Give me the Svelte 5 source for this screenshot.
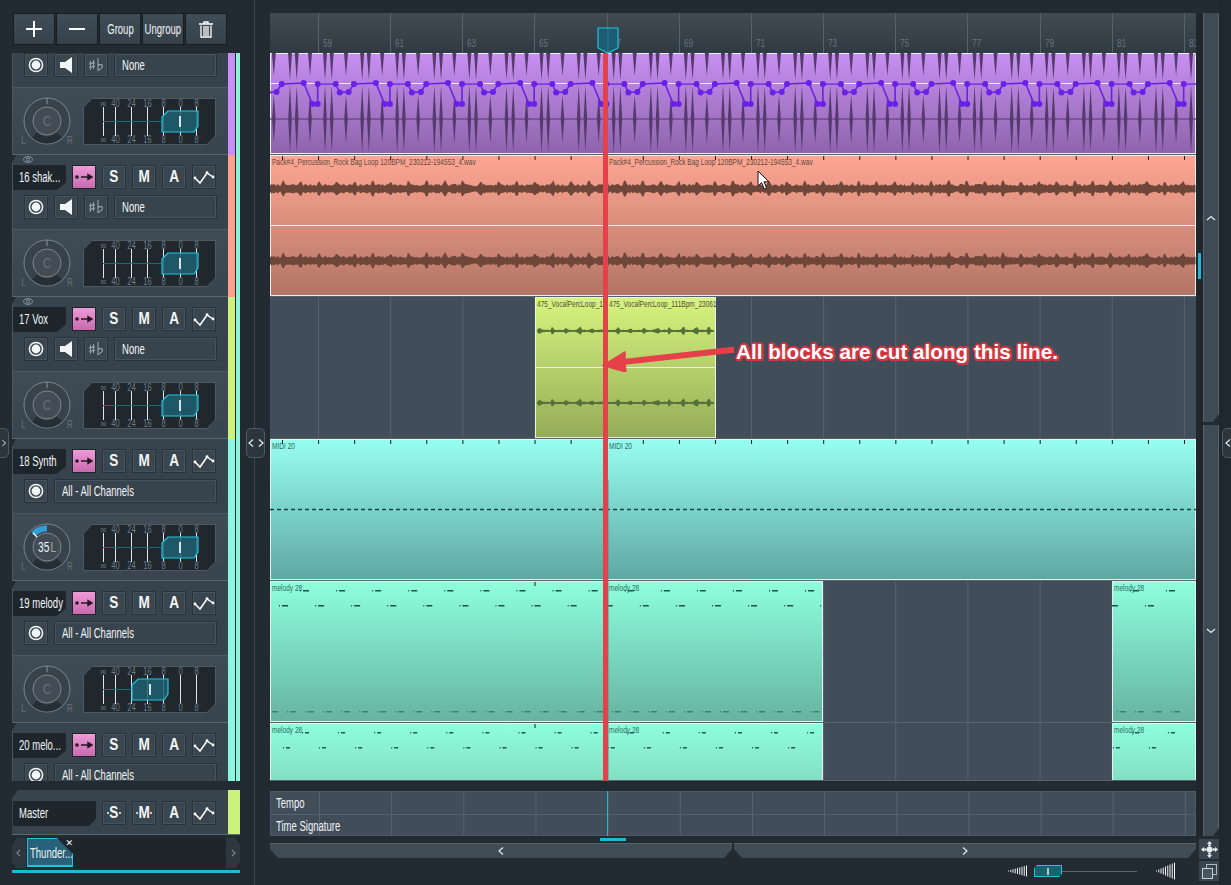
<script>
  const tracks = [
    { name: '15 drums', color: '#cb8ef5', kind: 'audio', pan: 'C' },
    { name: '16 shak...', color: '#ff9f8e', kind: 'audio', pan: 'C', eye: true },
    { name: '17 Vox', color: '#cdf07e', kind: 'audio', pan: 'C', eye: true },
    { name: '18 Synth', color: '#8cf5e0', kind: 'midi', pan: '35L' },
    { name: '19 melody', color: '#8cf5e0', kind: 'midi', pan: 'C', shift: -30 },
    { name: '20 melo...', color: '#8cf5e0', kind: 'midi', pan: 'C' }
  ];

  const meterMarks = [
    { x: 20, label: '∞' }, { x: 32, label: '40' }, { x: 48, label: '24' }, { x: 64, label: '16' },
    { x: 80, label: '8' }, { x: 97, label: '0' }, { x: 113, label: '8' }
  ];

  const rulerLabels = ['59', '61', '63', '65', '67', '69', '71', '73', '75', '77', '79', '81', '83'];

  // small seeded random so the waveforms stay the same between runs
  function makeRandom(seed) {
    let s = seed;
    return () => {
      s = (s * 1664525 + 1013904223) % 4294967296;
      return s / 4294967296;
    };
  }

  function band(cx, x0, x1, ampAt, seed) {
    const rnd = makeRandom(seed);
    const top = [];
    const bottom = [];
    for (let x = x0; x <= x1; x += 1.5) {
      const a = ampAt(x, rnd);
      top.push(`${x} ${(cx - a).toFixed(1)}`);
      bottom.unshift(`${x} ${(cx + a * 0.9).toFixed(1)}`);
    }
    return 'M' + top.concat(bottom).join('L') + 'Z';
  }

  const salmonAmp = (x, rnd) => {
    const d = ((x + 6) % 18) / 18;
    return 2.8 + rnd() * 2.4 + (d < 0.14 ? 3.5 : 0);
  };
  const limeAmp = (x, rnd) => {
    const d = Math.abs(((x + 3) % 13) - 6.5) / 6.5;
    return 0.8 + (d > 0.75 ? 3 * rnd() + 1 : rnd() * 0.6);
  };

  function purpleSpikes() {
    let d = '';
    const rel = [0, 6.7, 20, 35, 41.7, 56];
    const len = [27, 27, 23, 27, 27, 23];
    const low = [34, 33, 24, 34, 33, 24];
    for (let k = -1; k < 14; k++) {
      rel.forEach((r, i) => {
        const x = 20 + r + k * 72.17;
        d += `M${x - 2} 0L${x + 2} 0L${x} ${len[i]}Z`;
        d += `M${x} ${66 - low[i]}L${x + 1.8} 66L${x} ${66 + low[i]}L${x - 1.8} 66Z`;
      });
    }
    return d;
  }

  const autoShape = [[0, 30], [8.7, 51], [14, 51], [14, 31], [32, 31], [36, 39.5], [45, 39], [50.3, 31]];
  const autoPoints = [];
  for (let k = -1; k < 13; k++) {
    autoShape.forEach(([x, y]) => autoPoints.push({ x: +(33.7 + x + k * 72.17).toFixed(1), y }));
  }

  function notes(x0, step, count, y, w, h) {
    const out = [];
    for (let k = 0; k < count; k++) out.push({ x: x0 + k * step, y, w, h });
    return out;
  }

  const ticks = (from, to) => {
    const out = [];
    for (let x = 12.5; x < 926; x += 36.08) if (x >= from && x <= to) out.push(x);
    return out;
  };

  const label1 = 'Pack#4_Percussion_Rock Bag Loop 120BPM_230212-194553_4.wav';
  const label2 = '475_VocalPercLoop_111Bpm_23061';

  const lanes = [
    {
      h: 102, fill: 'purple',
      clips: [{ left: 0, width: 926 }],
      art: { mid: 30, spikes: purpleSpikes(), auto: autoPoints }
    },
    {
      h: 142, fill: 'salmon',
      clips: [{ left: 0, width: 337, label: label1 }, { left: 337, width: 589, label: label1 }],
      art: {
        mid: 70, waveColor: '#6f463a', tickList: ticks(0, 926),
        waves: [band(34, 0, 926, salmonAmp, 7), band(106, 0, 926, salmonAmp, 7)]
      }
    },
    {
      h: 142, fill: 'lime',
      clips: [{ left: 265, width: 72, label: label2 }, { left: 337, width: 109, label: label2 }],
      art: {
        mid: 70, waveColor: '#56703a',
        waves: [band(34, 267, 445, limeAmp, 11), band(106, 267, 445, limeAmp, 11)]
      }
    },
    {
      h: 142, fill: 'midi',
      clips: [{ left: 0, width: 337, label: 'MIDI 20' }, { left: 337, width: 589, label: 'MIDI 20' }],
      art: { dash: 70, tickList: ticks(0, 926) }
    },
    {
      h: 142, fill: 'melody',
      clips: [
        { left: 0, width: 337, label: 'melody 28' },
        { left: 337, width: 216, label: 'melody 28' },
        { left: 842, width: 84, label: 'melody 28' }
      ],
      art: {
        tickList: [265],
        noteColor: '#1f5148',
        noteList: [
          ...notes(33, 36.08, 25, 9, 6, 1.5),
          ...notes(12, 36.08, 25, 24, 6, 1.5)
        ],
        fadedNotes: notes(2, 18.04, 51, 130, 6, 1.5)
      }
    },
    {
      h: 58, fill: 'melody-cut',
      clips: [
        { left: 0, width: 337, label: 'melody 28' },
        { left: 337, width: 216, label: 'melody 28' },
        { left: 842, width: 84, label: 'melody 28' }
      ],
      art: {
        tickList: [265],
        noteColor: '#1d5a50',
        noteList: [
          ...notes(35, 36.08, 25, 9, 4, 1.5),
          ...notes(16, 36.08, 25, 24, 4, 1.5)
        ]
      }
    }
  ];

  const wedge = (n, gap, maxH, minH) =>
    Array.from({ length: n }, (_, i) => ({ x: i * gap + 0.5, h: minH + ((maxH - minH) * i) / (n - 1) }));
</script>

{#snippet curveIcon()}
  <svg width="22" height="16" viewBox="0 0 22 16">
    <path d="M2 9 L7 14 L14 4 L20 8" fill="none" stroke="#fff" stroke-width="1.5" />
    <circle cx="2" cy="9" r="1.4" fill="#fff" /><circle cx="14" cy="3.6" r="1.4" fill="#fff" /><circle cx="20" cy="8" r="1.4" fill="#fff" />
  </svg>
{/snippet}

{#snippet recIcon()}
  <svg width="18" height="18" viewBox="0 0 18 18">
    <circle cx="9" cy="9" r="6.6" fill="none" stroke="#f2f5f6" stroke-width="1.5" />
    <circle cx="9" cy="9" r="4.4" fill="#f2f5f6" />
  </svg>
{/snippet}

{#snippet chevron(points)}
  <svg width="10" height="8" viewBox="0 0 10 8"><path d={points} fill="none" stroke="#e4eaee" stroke-width="1.2" /></svg>
{/snippet}

<div class="app">
  <aside class="left">
    <div class="toolbar">
      <button class="tool" aria-label="Add">
        <svg width="18" height="18" viewBox="0 0 18 18"><path d="M9 1V17M1 9H17" stroke="#fff" stroke-width="2" /></svg>
      </button>
      <button class="tool" aria-label="Remove">
        <svg width="18" height="18" viewBox="0 0 18 18"><path d="M1 9H17" stroke="#fff" stroke-width="2" /></svg>
      </button>
      <button class="tool"><span class="cond mid">Group</span></button>
      <button class="tool"><span class="cond mid">Ungroup</span></button>
      <button class="tool" aria-label="Delete">
        <svg width="14" height="17" viewBox="0 0 14 17">
          <path d="M0 3H14M5 3V1H9V3" fill="none" stroke="#fff" stroke-width="1.4" />
          <path d="M2 4.5V16H12V4.5M5 5V15M7 5V15M9 5V15" fill="none" stroke="#fff" stroke-width="1.3" />
        </svg>
      </button>
    </div>

    <div class="track-clip">
      <div class="track-list">
        {#each tracks as t}
          <div class="track-line">
            <div class="track">
              {#if t.eye}
                <svg class="eye" width="10" height="7" viewBox="0 0 10 7">
                  <ellipse cx="5" cy="3.5" rx="4.4" ry="2.8" fill="none" stroke="#8b98a2" />
                  <circle cx="5" cy="3.5" r="1.6" fill="none" stroke="#8b98a2" />
                </svg>
              {/if}
              <div class="row1">
                <div class="chip"><span class="cond">{t.name}</span></div>
                <div class="btn pink">
                  <svg width="18" height="8" viewBox="0 0 18 8">
                    <circle cx="2" cy="4" r="1.8" fill="#2a1626" />
                    <path d="M6 4H15M13 1.5L17 4L13 6.5Z" stroke="#2a1626" stroke-width="1.4" fill="#2a1626" />
                  </svg>
                </div>
                <div class="btn letter"><span>S</span></div>
                <div class="btn letter"><span>M</span></div>
                <div class="btn letter"><span>A</span></div>
                <div class="btn">{@render curveIcon()}</div>
              </div>
              <div class="row2">
                <div class="btn">{@render recIcon()}</div>
                {#if t.kind === 'audio'}
                  <div class="btn">
                    <svg width="14" height="16" viewBox="0 0 14 16"><path d="M1 5H6L13 0V16L6 11H1Z" fill="#f2f5f6" /></svg>
                  </div>
                  <div class="btn">
                    <svg width="16" height="14" viewBox="0 0 16 14">
                      <path d="M2.5 3V12M5.5 2V11M1 6L7 4.6M1 9.5L7 8.1M10 0V12.5C12 11.5 14.5 10 14.5 8C14.5 6.5 12 6 10 7.5" fill="none" stroke="#97a3ac" stroke-width="1.1" />
                    </svg>
                  </div>
                  <div class="select"><span class="cond">None</span></div>
                {:else}
                  <div class="select"><span class="cond">All - All Channels</span></div>
                {/if}
              </div>
              <div class="mix">
                <svg class="knob" width="54" height="54" viewBox="0 0 54 54">
                  <circle cx="27" cy="27" r="23" fill="#37424b" stroke="#7b8790" />
                  <path d="M14.5 41 A18 18 0 0 0 39.5 41" fill="none" stroke="#252e35" stroke-width="7" />
                  <circle cx="27" cy="27" r="14" fill="#414c56" stroke="#7b8790" />
                  {#if t.pan === 'C'}
                    <path d="M27 4V10" stroke="#8b97a0" />
                    <text transform="translate(27 32) scale(.8 1)" class="knob-c">C</text>
                  {:else}
                    <path d="M27 8.5 A18.5 18.5 0 0 0 13.5 14" fill="none" stroke="#2f9fd6" stroke-width="6" />
                    <path d="M13 13L17 17" stroke="#fff" stroke-width="1.2" />
                    <text transform="translate(18 32) scale(.68 1)" class="knob-val">35</text>
                    <text transform="translate(30.5 32) scale(.68 1)" class="knob-l">L</text>
                  {/if}
                  <text transform="translate(3.5 50) scale(.8 1)" class="knob-side">L</text>
                  <text transform="translate(50 50) scale(.8 1)" class="knob-side">R</text>
                </svg>
                <svg class="meter" width="133" height="47" viewBox="0 0 133 47">
                  <path d="M.5 9.5L9 .5H132.5V38L124 46.5H.5Z" fill="#20282e" stroke="#4d5963" />
                  {#each meterMarks as m}
                    <path d="M{m.x}.5 9V38" stroke="#dfe5e8" />
                    <text transform="translate({m.x + 0.5} 9) scale(.72 1)" class="scale">{m.label}</text>
                    <text transform="translate({m.x + 0.5} 45) scale(.72 1)" class="scale">{m.label}</text>
                  {/each}
                  <path d="M20 23.5H{79 + (t.shift || 0)}" stroke="#1f6a72" />
                  <g transform="translate({t.shift || 0} 0)">
                    <path d="M85 13H115V28L111 34H79V19Z" fill="#1f5f6e" fill-opacity=".85" stroke="#22c3e0" stroke-width="1.2" />
                    <path d="M97 18V29" stroke="#d9e2e4" stroke-width="2" />
                  </g>
                </svg>
              </div>
            </div>
            <div class="strip" style="background: {t.color}"></div>
          </div>
        {/each}
      </div>
    </div>

    <div class="master">
      <div class="master-panel">
        <div class="chip wide"><span class="cond">Master</span></div>
        <div class="btn letter dots"><span>S</span></div>
        <div class="btn letter dots"><span>M</span></div>
        <div class="btn letter"><span>A</span></div>
        <div class="btn">{@render curveIcon()}</div>
      </div>
      <div class="master-strip"></div>
    </div>

    <div class="tabs">
      <div class="tab-arrow">{@render chevron('M6 1L3 4L6 7')}</div>
      <div class="tab-wrap">
        <div class="tab"><span class="cond">Thunder...</span></div>
        <span class="tab-x">✕</span>
      </div>
      <div class="tab-space"></div>
      <div class="tab-arrow">{@render chevron('M4 1L7 4L4 7')}</div>
    </div>
    <div class="tab-line"></div>
  </aside>

  <main class="main">
    <div class="work">
      <div class="ruler">
        {#each rulerLabels as r}
          <span class="bar"><span class="cond num">{r}</span></span>
        {/each}
      </div>

      <div class="lanes">
        {#each lanes as lane}
          <div class="lane" style="height: {lane.h}px">
            {#each lane.clips as c}
              <div class="clip {lane.fill}" style="left: {c.left}px; width: {c.width}px">
                <svg class="art" width={c.width} height={lane.h} viewBox="{c.left} 0 {c.width} {lane.h}">
                  {#if lane.art.spikes}
                    <path d="M0 66H926" stroke="#6f4c89" stroke-width="1.5" />
                    <path d={lane.art.spikes} fill="#553a6d" />
                  {/if}
                  {#if lane.art.mid}
                    <path d="M0 {lane.art.mid}.5H926" stroke="#f1ecec" />
                  {/if}
                  {#if lane.art.waves}
                    {#each lane.art.waves as w}
                      <path d={w} fill={lane.art.waveColor} />
                    {/each}
                  {/if}
                  {#if lane.art.auto}
                    <polyline points={lane.art.auto.map((p) => `${p.x},${p.y}`).join(' ')} fill="none" stroke="#6a20e6" stroke-width="1.6" />
                    {#each lane.art.auto as p}
                      <circle cx={p.x} cy={p.y} r="3" fill="#6a20e6" />
                    {/each}
                  {/if}
                  {#if lane.art.dash}
                    <path d="M0 {lane.art.dash}.5H926" stroke="#18413f" stroke-width="1.5" stroke-dasharray="4 3" />
                  {/if}
                  {#if lane.art.tickList}
                    {#each lane.art.tickList as x}
                      <path d="M{x} 1V5" stroke="#1a1a1a" />
                    {/each}
                  {/if}
                  {#if lane.art.noteList}
                    {#each lane.art.noteList as n}
                      <rect x={n.x} y={n.y} width={n.w} height={n.h} fill={lane.art.noteColor} />
                      <rect x={n.x - 3} y={n.y} width="1" height={n.h} fill={lane.art.noteColor} />
                    {/each}
                  {/if}
                  {#if lane.art.fadedNotes}
                    {#each lane.art.fadedNotes as n}
                      <rect x={n.x} y={n.y} width={n.w} height={n.h} fill="#3b7f70" />
                      <rect x={n.x - 3} y={n.y} width="1" height={n.h} fill="#3b7f70" />
                    {/each}
                  {/if}
                </svg>
                {#if c.label}<span class="clip-label">{c.label}</span>{/if}
              </div>
            {/each}
          </div>
        {/each}
      </div>

      <div class="tempo">
        <div class="tempo-row"><span class="cond">Tempo</span></div>
        <div class="tempo-row"><span class="cond">Time Signature</span></div>
      </div>
      <div class="hmark"><span></span></div>
      <div class="hscroll">
        <button class="hbtn" aria-label="Scroll left">{@render chevron('M7 0.5L3 4L7 7.5')}</button>
        <button class="hbtn" aria-label="Scroll right">{@render chevron('M3 0.5L7 4L3 7.5')}</button>
      </div>
      <div class="zoomrow">
        <svg width="20" height="12" viewBox="0 0 20 12">
          {#each wedge(9, 2.25, 11, 1) as b}
            <path d="M{b.x} {6 - b.h / 2}V{6 + b.h / 2}" stroke="#f1f4f5" />
          {/each}
        </svg>
        <div class="slider">
          <div class="thumb"><i></i></div>
          <div class="slider-line"></div>
        </div>
        <svg class="big" width="20" height="18" viewBox="0 0 20 18">
          {#each wedge(9, 2.25, 17, 1) as b}
            <path d="M{b.x} {9 - b.h / 2}V{9 + b.h / 2}" stroke="#f1f4f5" />
          {/each}
        </svg>
      </div>
    </div>

    <div class="gutter">
      <div class="vert">
        <div class="vtrack"><span></span></div>
        <div class="vbars">
          <div class="vbar">{@render chevron('M1 6L5 2.5L9 6')}</div>
          <div class="vbar lower">{@render chevron('M1 2L5 5.5L9 2')}</div>
        </div>
      </div>
      <div class="corner">
        <svg width="17" height="17" viewBox="0 0 17 17">
          <path d="M8.5 0L11 3H6ZM8.5 17L6 14H11ZM0 8.5L3 6V11ZM17 8.5L14 11V6Z" fill="#e8edf0" />
          <circle cx="8.5" cy="8.5" r="3" fill="#e8edf0" />
          <circle cx="4.2" cy="8.5" r="1.3" fill="#e8edf0" /><circle cx="12.8" cy="8.5" r="1.3" fill="#e8edf0" />
          <circle cx="8.5" cy="4.2" r="1.3" fill="#e8edf0" /><circle cx="8.5" cy="12.8" r="1.3" fill="#e8edf0" />
        </svg>
      </div>
      <div class="corner">
        <svg width="17" height="17" viewBox="0 0 17 17">
          <rect x="5.5" y="1.5" width="10" height="10" fill="none" stroke="#aeb7bd" />
          <rect x="1.5" y="5.5" width="10" height="10" fill="#48545e" stroke="#c8d0d5" />
        </svg>
      </div>
    </div>
  </main>

  <div class="edge"></div>

  <!-- things lying over the window -->
  <button class="toggle t-left" aria-label="Open left">{@render chevron('M3 0.5L7 4L3 7.5')}</button>
  <div class="toggle t-mid">
    {@render chevron('M6 0.5L2 4L6 7.5')}
    {@render chevron('M4 0.5L8 4L4 7.5')}
  </div>
  <div class="toggle t-right">{@render chevron('M7 0.5L3 4L7 7.5')}</div>

  <div class="playhead"></div>
  <div class="phantom"></div>
  <div class="thinhead"></div>
  <svg class="flag" width="22" height="27" viewBox="0 0 22 27">
    <path d="M1 1H21V21L11 26L1 21Z" fill="#1c5c72" stroke="#27bfe0" stroke-width="1.2" />
    <path d="M11 1V26" stroke="#27bfe0" stroke-opacity=".35" />
  </svg>

  <svg class="arrow" width="140" height="26" viewBox="0 0 140 26">
    <path d="M2 19.5L24 6L24 13.5L132 1.5L132.5 6L24 18L25 26Z" fill="#e6414a" stroke="#e6414a" stroke-width="1.5" stroke-linejoin="round" />
  </svg>
  <div class="note">All blocks are cut along this line.</div>

  <svg class="cursor" width="14" height="21" viewBox="0 0 14 21">
    <path d="M1 1V16L4.6 12.6L7.2 19L9.6 18L7 11.8H12Z" fill="#fff" stroke="#111" />
  </svg>
</div>

<style>
  :global(body) {
    margin: 0;
    background: #222b31;
  }

  .app {
    position: relative;
    width: 1231px;
    height: 885px;
    overflow: hidden;
    display: flex;
    background: #222b31;
    color: #f2f5f6;
    font-family: "Liberation Sans", sans-serif;
  }

  button {
    font-family: inherit;
    color: inherit;
    padding: 0;
  }

  /* the app's UI face is a tall narrow one, so squeeze a regular sans */
  .cond {
    display: inline-block;
    white-space: nowrap;
    transform: scaleX(.68);
    transform-origin: left center;
  }

  .cond.mid {
    transform-origin: center;
  }

  .left {
    width: 255px;
    box-sizing: border-box;
    flex: none;
    padding: 13px 0 0 12px;
    border-right: 1px solid #3b4650;
  }

  .toolbar {
    display: flex;
    gap: 1px;
    margin-left: 1px;
    height: 32px;
  }

  .tool {
    width: 42px;
    height: 32px;
    display: flex;
    align-items: center;
    justify-content: center;
    box-sizing: border-box;
    background: linear-gradient(#404c56, #36424b);
    border: 1px solid #171e23;
    font-size: 14px;
  }

  .track-clip {
    margin-top: 8px;
    width: 228px;
    height: 728px;
    overflow: hidden;
  }

  .track-list {
    margin-top: -40px;
  }

  .track-line {
    display: flex;
    height: 142px;
  }

  .strip {
    width: 7px;
    margin-right: 1px;
    height: 142px;
    flex: none;
    position: relative;
  }

  .strip::after {
    content: "";
    position: absolute;
    left: 8px;
    top: 0;
    bottom: 0;
    width: 4px;
    background: #8cf2d8;
  }

  .track {
    position: relative;
    width: 216px;
    height: 142px;
    flex: none;
    box-sizing: border-box;
    padding-top: 10px;
    background: linear-gradient(#38444d, #34404a);
    border-bottom: 1px solid #5a6670;
    border-left: 1px solid #4a5660;
    clip-path: polygon(4px 0, 100% 0, 100% 100%, 0 100%, 0 8px);
  }

  .eye {
    position: absolute;
    left: 10px;
    top: 1px;
  }

  .row1,
  .row2 {
    display: flex;
    gap: 6px;
  }

  .row1 {
    height: 25px;
  }

  .row2 {
    margin-top: 5px;
    padding-left: 11px;
    height: 24px;
  }

  .chip {
    width: 53px;
    height: 25px;
    flex: none;
    box-sizing: border-box;
    padding: 1px 0 0 6px;
    line-height: 23px;
    font-size: 14px;
    background: #1e262c;
    clip-path: polygon(0 0, 100% 0, 100% 70%, 82% 100%, 0 100%);
  }

  .chip.wide {
    width: 83px;
    clip-path: polygon(0 0, 100% 0, 100% 70%, 92% 100%, 0 100%);
  }

  .btn {
    width: 24px;
    height: 24px;
    flex: none;
    box-sizing: border-box;
    display: flex;
    align-items: center;
    justify-content: center;
    background: #3a464f;
    border: 1px solid #29323a;
    box-shadow: inset 0 0 0 1px #46525c;
  }

  .btn.pink {
    background: linear-gradient(#f09ad8, #c76aae);
    border-color: #1e262c;
    box-shadow: none;
  }

  .btn.letter {
    font-size: 17px;
    font-weight: bold;
  }

  .btn.letter span {
    display: inline-block;
    transform: scaleX(.8);
  }

  .btn.dots span {
    margin: 0 -1px;
  }

  .btn.dots::before,
  .btn.dots::after {
    content: "";
    width: 2px;
    height: 2px;
    flex: none;
    border-radius: 50%;
    background: #fff;
  }

  .select {
    flex: 1;
    margin-right: 11px;
    box-sizing: border-box;
    padding-left: 7px;
    height: 24px;
    line-height: 22px;
    font-size: 14px;
    background: #38444d;
    border: 1px solid #29323a;
    box-shadow: inset 0 0 0 1px #46525c;
  }

  .mix {
    margin-top: 10px;
    height: 67px;
    box-sizing: border-box;
    padding: 6px 12px 0 7px;
    display: flex;
    gap: 9px;
    align-items: flex-start;
    background: linear-gradient(#3f4b55, #39454e);
    border-top: 1px solid #4c5862;
  }

  .meter {
    margin-top: 4px;
  }

  .knob-c,
  .knob-side,
  .scale {
    text-anchor: middle;
  }

  .knob-c {
    font-size: 15px;
    fill: #626e78;
  }

  .knob-val {
    font-size: 15px;
    fill: #f2f5f6;
  }

  .knob-l {
    font-size: 15px;
    fill: #a3adb4;
  }

  .knob-side {
    font-size: 10px;
    fill: #66727c;
  }

  .scale {
    font-size: 10.5px;
    fill: #6f7b85;
  }

  .master {
    display: flex;
    margin-top: 9px;
    height: 45px;
    width: 228px;
  }

  .master-panel {
    width: 216px;
    flex: none;
    box-sizing: border-box;
    display: flex;
    gap: 6px;
    align-items: flex-start;
    padding: 11px 0 0 1px;
    background: #38444d;
    border-bottom: 1px solid #5a6670;
    clip-path: polygon(6px 0, 100% 0, 100% 100%, 0 100%, 0 8px);
  }

  .master-strip {
    width: 12px;
    background: #c9f27e;
    border-bottom: 1px solid #5a6670;
  }

  .tabs {
    width: 228px;
    height: 30px;
    margin-top: 3px;
    display: flex;
    background: #1e262c;
  }

  .tab-arrow {
    width: 14px;
    flex: none;
    display: flex;
    align-items: center;
    justify-content: center;
    background: #2d373f;
    clip-path: polygon(30% 0, 100% 0, 100% 100%, 30% 100%, 0 80%, 0 20%);
  }

  .tab-arrow :global(path) {
    stroke: #76828b;
  }

  .tab-arrow:last-child {
    clip-path: polygon(0 0, 70% 0, 100% 20%, 100% 80%, 70% 100%, 0 100%);
  }

  .tab-space {
    flex: 1;
  }

  .tab-wrap {
    position: relative;
    width: 46px;
    margin-left: 1px;
  }

  .tab {
    height: 29px;
    box-sizing: border-box;
    padding: 6px 0 0 2px;
    font-size: 14px;
    background: #27617a;
    border: 1px solid #27bfe0;
    border-bottom-width: 2px;
    clip-path: polygon(0 0, 65% 0, 100% 55%, 100% 100%, 0 100%);
  }

  .tab-x {
    position: absolute;
    right: 0;
    top: 0;
    font: 9px "DejaVu Sans", sans-serif;
    color: #fff;
  }

  .tab-line {
    width: 228px;
    height: 3px;
    margin-top: 2px;
    background: #1bb9de;
  }

  .main {
    display: flex;
    flex: none;
    box-sizing: border-box;
    padding: 13px 0 0 15px;
    height: 885px;
  }

  .work {
    width: 926px;
    flex: none;
  }

  .ruler {
    height: 40px;
    box-sizing: border-box;
    display: flex;
    padding-left: 48px;
    background: linear-gradient(#404b54, #2f3a42);
    overflow: hidden;
  }

  .bar {
    flex: 0 0 72.17px;
    box-sizing: border-box;
    border-left: 1px solid #56626c;
    padding: 24px 0 0 4px;
    font-size: 10.5px;
    color: #68747e;
  }

  .cond.num {
    transform: scaleX(.78);
  }

  .lanes {
    height: 728px;
    overflow: hidden;
    background-color: #414e59;
    background-image: linear-gradient(90deg, #56636e 1px, transparent 1px);
    background-size: 72.17px 100%;
    background-position: 48px 0;
  }

  .lane {
    position: relative;
    box-sizing: border-box;
    border-bottom: 1px solid #56636e;
  }

  .clip {
    position: absolute;
    top: 0;
    bottom: 0;
    overflow: hidden;
    box-shadow: inset 0 0 0 1px #e8f0ee;
  }

  .purple {
    background: linear-gradient(#c88ff2, #8d64ab);
  }

  .salmon {
    background: linear-gradient(#ffa693, #b27565);
  }

  .lime {
    background: linear-gradient(#d6f47e, #95ac58);
  }

  .midi {
    background: linear-gradient(#97fff0, #5ea7a2);
  }

  .melody {
    background: linear-gradient(#8effdd, #66b3a0);
  }

  .melody-cut {
    background: linear-gradient(#8effdd, #83dfc4);
    box-shadow: inset 0 1px 0 #e8f0ee, inset 1px 0 0 #e8f0ee, inset -1px 0 0 #e8f0ee;
  }

  .art {
    position: absolute;
    left: 0;
    top: 0;
  }

  .clip-label {
    position: absolute;
    left: 2px;
    top: 2px;
    white-space: nowrap;
    font-size: 9.5px;
    line-height: 10px;
    color: #5a4a3e;
    transform: scaleX(.69);
    transform-origin: left center;
  }

  .midi .clip-label,
  .melody .clip-label,
  .melody-cut .clip-label {
    color: #2c6a62;
  }

  .tempo {
    margin-top: 10px;
    height: 45px;
    box-sizing: border-box;
    background-color: #414e59;
    background-image: linear-gradient(90deg, #56636e 1px, transparent 1px);
    background-size: 72.17px 100%;
    background-position: 48px 0;
    border: 1px solid #4d5a65;
  }

  .tempo-row {
    height: 22px;
    box-sizing: border-box;
    padding-left: 5px;
    line-height: 22px;
    font-size: 14px;
  }

  .tempo-row + .tempo-row {
    border-top: 1px solid #56636e;
  }

  .hmark {
    height: 7px;
    padding: 2px 0 0 330px;
    box-sizing: border-box;
  }

  .hmark span {
    display: block;
    width: 26px;
    height: 3px;
    background: #1bb9de;
  }

  .hscroll {
    display: flex;
    gap: 2px;
    height: 15px;
  }

  .hbtn {
    flex: 1;
    display: flex;
    align-items: center;
    justify-content: center;
    background: #404c56;
    border: 0;
    box-shadow: inset 0 1px 0 #56626c;
    clip-path: polygon(0 0, 100% 0, 100% 40%, calc(100% - 8px) 100%, 8px 100%, 0 40%);
  }

  .zoomrow {
    display: flex;
    align-items: center;
    height: 26px;
    padding-left: 738px;
    gap: 6px;
  }

  .slider {
    width: 103px;
    display: flex;
    align-items: center;
  }

  .thumb {
    width: 28px;
    height: 12px;
    flex: none;
    box-sizing: border-box;
    display: flex;
    align-items: center;
    justify-content: center;
    background: #1f5f6e;
    border: 1px solid #27bfe0;
    clip-path: polygon(10% 0, 100% 0, 100% 70%, 90% 100%, 0 100%, 0 30%);
  }

  .thumb i {
    width: 2px;
    height: 7px;
    background: #b9c6ca;
  }

  .slider-line {
    flex: 1;
    height: 1px;
    background: #5b6670;
  }

  .big {
    margin-left: 13px;
  }

  .gutter {
    width: 23px;
    flex: none;
  }

  .vert {
    display: flex;
    height: 823px;
    margin-bottom: 3px;
  }

  .vtrack {
    width: 7px;
    box-sizing: border-box;
    padding: 240px 0 0 2px;
    background: #1f272d;
  }

  .vtrack span {
    display: block;
    width: 3px;
    height: 26px;
    background: #1bb9de;
  }

  .vbars {
    flex: 1;
    display: flex;
    flex-direction: column;
    gap: 3px;
  }

  .vbar {
    height: 409px;
    box-sizing: border-box;
    display: flex;
    align-items: center;
    justify-content: center;
    background: #3e4a54;
    border-left: 1px solid #56626c;
    border-right: 1px solid #56626c;
    clip-path: polygon(0 0, 100% 0, 100% calc(100% - 8px), calc(100% - 6px) 100%, 0 100%);
  }

  .vbar.lower {
    height: 411px;
  }

  .corner {
    width: 20px;
    height: 20px;
    margin: 0 0 2px 3px;
    display: flex;
    align-items: center;
    justify-content: center;
    background: #3a464f;
  }

  .edge {
    flex: 1;
    background: #1f282e;
  }

  .toggle {
    position: absolute;
    top: 428px;
    height: 30px;
    display: flex;
    align-items: center;
    justify-content: center;
    box-sizing: border-box;
    background: #2c363e;
    border: 1px solid #4d5963;
  }

  .t-left {
    left: -1px;
    width: 10px;
    border-radius: 0 5px 5px 0;
  }

  .t-mid {
    left: 246px;
    width: 19px;
    border-radius: 5px;
    gap: 0;
  }

  .t-mid :global(svg) {
    margin: 0 -1px;
  }

  .t-right {
    left: 1222px;
    width: 12px;
    border-radius: 5px 0 0 5px;
  }

  .playhead {
    position: absolute;
    left: 603px;
    top: 53px;
    width: 4.5px;
    height: 728px;
    background: #e6414a;
  }

  .phantom {
    position: absolute;
    left: 607.5px;
    top: 480px;
    width: 1px;
    height: 301px;
    background: rgba(120, 130, 135, .5);
  }

  .thinhead {
    position: absolute;
    left: 607px;
    top: 791px;
    width: 1px;
    height: 45px;
    background: #1bb9de;
  }

  .flag {
    position: absolute;
    left: 597px;
    top: 27px;
  }

  .arrow {
    position: absolute;
    left: 601px;
    top: 346px;
  }

  .note {
    position: absolute;
    left: 736px;
    top: 340px;
    font: bold 20.7px "Liberation Sans", sans-serif;
    color: #fff;
    white-space: nowrap;
    text-shadow: 2px 0 0 #d8343e, -2px 0 0 #d8343e, 0 2px 0 #d8343e, 0 -2px 0 #d8343e,
      1.5px 1.5px 0 #d8343e, -1.5px 1.5px 0 #d8343e, 1.5px -1.5px 0 #d8343e, -1.5px -1.5px 0 #d8343e;
  }

  .cursor {
    position: absolute;
    left: 757px;
    top: 170px;
  }
</style>
